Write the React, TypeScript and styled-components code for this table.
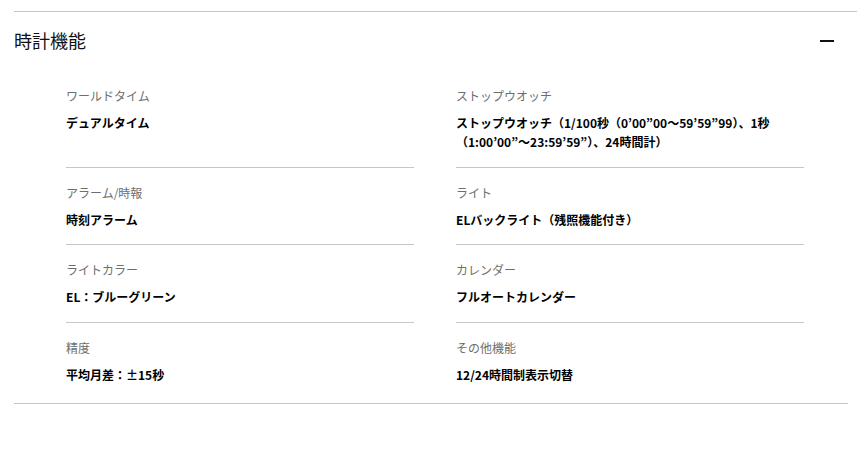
import styled, { createGlobalStyle } from 'styled-components';

const GlobalStyle = createGlobalStyle`
  html, body {
    margin: 0;
    padding: 0;
    background: #fff;
  }
  body {
    font-family: "Noto Sans CJK JP", "Noto Sans", sans-serif;
    color: #000;
  }
`;

const specs = [
  { label: 'ワールドタイム', value: 'デュアルタイム' },
  {
    label: 'ストップウオッチ',
    value: 'ストップウオッチ（1/100秒（0’00”00～59’59”99）、1秒（1:00’00”～23:59’59”）、24時間計）',
  },
  { label: 'アラーム/時報', value: '時刻アラーム' },
  { label: 'ライト', value: 'ELバックライト（残照機能付き）' },
  { label: 'ライトカラー', value: 'EL：ブルーグリーン' },
  { label: 'カレンダー', value: 'フルオートカレンダー' },
  { label: '精度', value: '平均月差：±15秒' },
  { label: 'その他機能', value: '12/24時間制表示切替' },
];

const Page = styled.div`
  padding: 11px 0 0 14px;
`;

const Accordion = styled.section`
  width: 834px;
  border-bottom: 1px solid #c6c6c6;
`;

const Header = styled.div`
  width: 843px;
  height: 59px;
  box-sizing: border-box;
  border-top: 1px solid #c6c6c6;
  display: flex;
  align-items: center;
  justify-content: space-between;
`;

const Title = styled.h2`
  margin: -3px 0 0;
  font-size: 18px;
  font-weight: 400;
  line-height: 1;
  color: #111;
`;

const Toggle = styled.span`
  display: block;
  width: 14px;
  height: 2px;
  margin-right: 23px;
  background: #111;
`;

const Grid = styled.dl`
  margin: 0;
  padding: 0 0 4px 52px;
  display: grid;
  grid-template-columns: 348px 348px;
  column-gap: 42px;
`;

const Item = styled.div<{ $divided: boolean }>`
  padding: 15px 0 15.5px;
  border-top: ${(p) => (p.$divided ? '1px solid #c6c6c6' : '1px solid transparent')};
`;

const Label = styled.dt`
  margin: 0 0 8px;
  font-size: 12px;
  line-height: 19px;
  color: #6e6e6e;
`;

const Value = styled.dd`
  margin: 0;
  font-size: 12px;
  font-weight: 700;
  line-height: 19px;
  color: #000;
`;

export default function App() {
  return (
    <>
      <GlobalStyle />
      <Page>
        <Accordion>
          <Header>
            <Title>時計機能</Title>
            <Toggle />
          </Header>
          <Grid>
            {specs.map((s, i) => (
              <Item key={s.label} $divided={i >= 2}>
                <Label>{s.label}</Label>
                <Value>{s.value}</Value>
              </Item>
            ))}
          </Grid>
        </Accordion>
      </Page>
    </>
  );
}
